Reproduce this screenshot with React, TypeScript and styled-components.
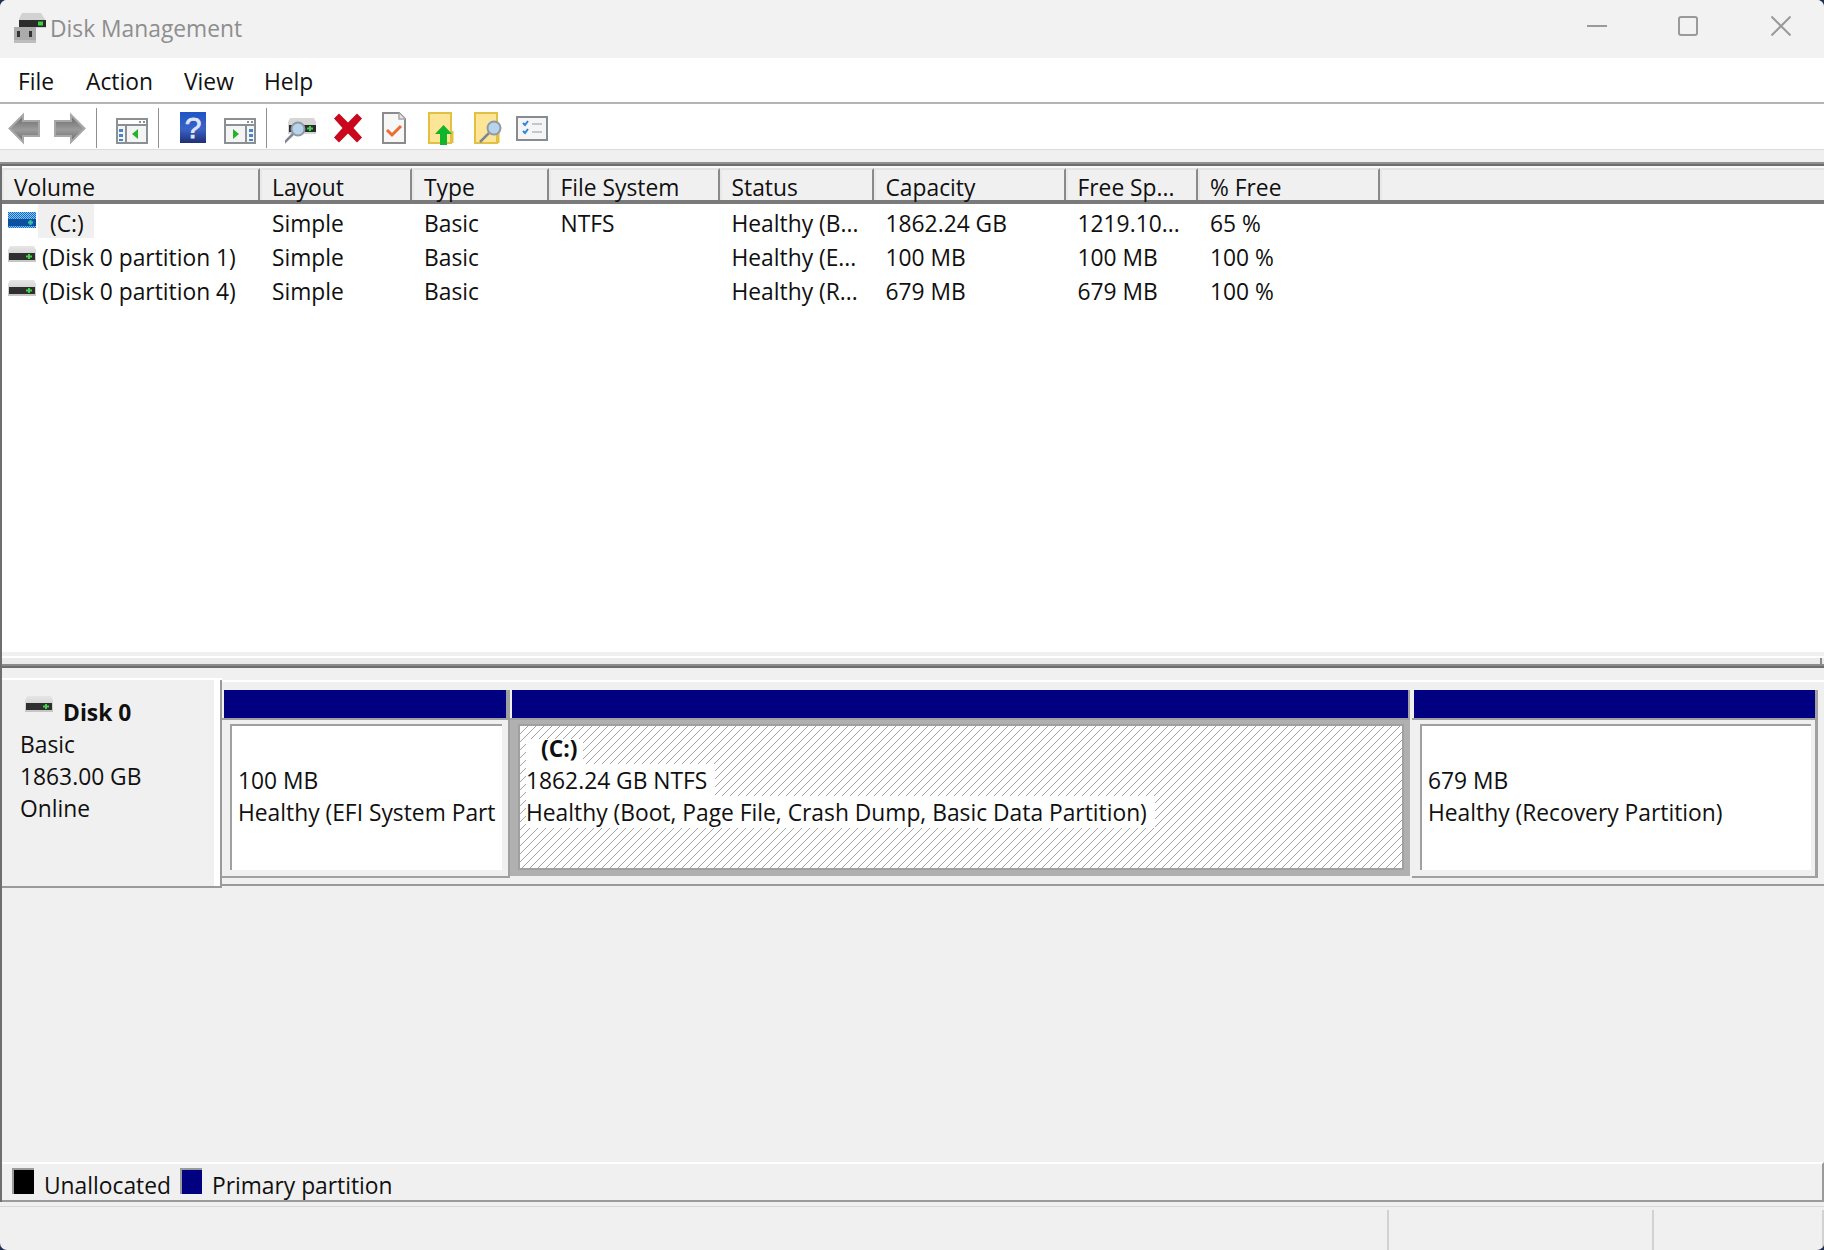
import React from "react";
import styled, { createGlobalStyle } from "styled-components";

const hatch =
  "data:image/svg+xml," +
  encodeURIComponent(
    `<svg xmlns='http://www.w3.org/2000/svg' width='8' height='8' shape-rendering='crispEdges'><rect width='8' height='8' fill='white'/>` +
      [0, 1, 2, 3, 4, 5, 6, 7].map((i) => `<rect x='${i}' y='${7 - i}' width='1' height='1' fill='#a2a2a2'/>`).join("") +
      `</svg>`
  );

const Global = createGlobalStyle`
  html, body { margin: 0; padding: 0; background: #1f2f55; }
  #root { width: 1824px; height: 1250px; }
  * { box-sizing: border-box; }
`;

const Win = styled.div`
  width: 1824px;
  height: 1250px;
  display: flex;
  flex-direction: column;
  overflow: hidden;
  border-radius: 7px;
  background: #f0f0f0;
  color: #101010;
  font-family: "Open Sans", "Noto Sans", "Liberation Sans", sans-serif;
  font-size: 22.8px;
  white-space: nowrap;
`;

const TitleBar = styled.div`
  height: 58px;
  flex: none;
  background: #f2f2f2;
  display: flex;
  align-items: center;
  padding: 0 33px 0 14px;
`;
const TitleText = styled.span`
  margin-left: 4px;
  color: #8e8e8e;
  position: relative;
  top: -1px;
`;
const Controls = styled.div`
  margin-left: auto;
  display: flex;
  gap: 72px;
  margin-top: -6px;
  & > svg:nth-child(1) { margin-right: -1px; }
  & > svg:nth-child(2) { margin-right: 1px; }
`;
const CtlIcon = styled.svg`
  width: 20px;
  height: 20px;
  fill: none;
  stroke: #9a9a9a;
  stroke-width: 2;
  display: block;
`;

const MenuBar = styled.div`
  height: 46px;
  flex: none;
  background: #fff;
  border-bottom: 2px solid #b2b4b8;
  display: grid;
  grid-template-columns: 68px 98px 80px auto;
  padding-left: 18px;
  align-items: center;
  justify-content: start;
`;
const MenuItem = styled.span`
  color: #111;
  position: relative;
  top: 1px;
`;

const Toolbar = styled.div`
  height: 45px;
  flex: none;
  background: #fff;
  display: flex;
  align-items: flex-start;
`;
const ToolSvg = styled.svg<{ $ml: number }>`
  display: block;
  height: 45px;
  flex: none;
  margin-left: ${(p) => p.$ml}px;
`;
const ToolSep = styled.div<{ $ml: number }>`
  width: 1px;
  height: 40px;
  margin-top: 4px;
  flex: none;
  background: #8f8f8f;
  margin-left: ${(p) => p.$ml}px;
`;
const ToolGap = styled.div`
  height: 13px;
  flex: none;
  background: #f0f0f0;
  border-top: 1px solid #dcdcdc;
`;

const Main = styled.div`
  height: 1040px;
  flex: none;
  display: flex;
  flex-direction: column;
  border-top: 4px solid #6e6e6e;
  border-left: 2px solid #6e6e6e;
  position: relative;
  &::before {
    content: "";
    position: absolute;
    left: -2px;
    right: 0;
    top: -4px;
    height: 2px;
    background: #909090;
  }
`;

const columns = "258px 152px 136.5px 171px 154px 192px 132.5px 181.5px 1fr";

const ListPanel = styled.div`
  height: 502px;
  flex: none;
  display: flex;
  flex-direction: column;
  background: #fff;
`;
const HeaderRow = styled.div`
  height: 38px;
  flex: none;
  display: grid;
  grid-template-columns: ${columns};
  background: #f0f0f0;
  border-bottom: 4px solid #7a7a7a;
  border-top: 2px solid #fafafa;
`;
const HeaderCell = styled.div`
  border-top: 2px solid #e3e3e3;
  border-left: 2px solid #e8e8e8;
  border-right: 2px solid #8a8a8a;
  padding-left: 10px;
  line-height: 35px;
  height: 32px;
  &:last-child { border-right: none; }
`;
const Rows = styled.div`
  flex: 1;
`;
const Row = styled.div`
  height: 34px;
  display: grid;
  grid-template-columns: ${columns};
  align-items: start;
`;
const Cell = styled.div`
  padding-left: 12px;
  line-height: 40px;
  height: 34px;
`;
const VolumeCell = styled.div`
  display: flex;
  align-items: flex-start;
  padding-left: 6px;
  height: 34px;
  line-height: 40px;
`;
const VolumeIcon = styled.svg`
  width: 28px;
  height: 16px;
  margin-top: 8px;
  flex: none;
  display: block;
`;
const VolName = styled.span<{ $selected?: boolean }>`
  margin-left: ${(p) => (p.$selected ? 2 : 6)}px;
  padding: 0 ${(p) => (p.$selected ? "10px" : "0")} 0 ${(p) => (p.$selected ? "12px" : "0")};
  background: ${(p) => (p.$selected ? "#f0f0f0" : "transparent")};
  height: 34px;
`;
const ScrollStub = styled.div`
  height: 12px;
  flex: none;
  background: #ebebeb;
  border-top: 4px solid #f0f0f0;
  box-shadow: inset 0 2px 0 #fff;
  position: relative;
  &::after {
    content: "";
    position: absolute;
    right: 2px;
    top: 2px;
    width: 2px;
    height: 6px;
    background: #8a8a8a;
  }
`;
const ScrollLine = styled.div`
  height: 4px;
  flex: none;
  background: #6e6e6e;
  box-shadow: inset 0 2px 0 #8c8c8c;
`;

const Graph = styled.div`
  flex: 1;
  display: flex;
  flex-direction: column;
  padding-top: 10px;
  background: #f0f0f0;
`;
const DiskRow = styled.div`
  height: 210px;
  flex: none;
  display: flex;
`;
const DiskInfo = styled.div`
  width: 220px;
  flex: none;
  border-top: 2px solid #fff;
  border-bottom: 2px solid #9a9a9a;
  box-shadow: inset -2px 0 0 #9a9a9a, inset -8px 0 0 #fff;
  padding: 17px 0 0 18px;
  line-height: 32px;
`;
const DiskTitle = styled.div`
  display: flex;
  align-items: flex-start;
  height: 32px;
  font-weight: 700;
`;
const DiskIcon = styled.svg`
  width: 28px;
  height: 16px;
  margin: -1px 10px 0 5px;
  flex: none;
  display: block;
`;
const Parts = styled.div`
  flex: 1;
  margin-top: 2px;
  border-top: 2px solid #fff;
  border-bottom: 2px solid #9a9a9a;
  padding: 8px 0 0;
  height: 206px;
  display: flex;
  align-items: flex-start;
`;
const Part = styled.div<{ $w: number; $rb?: number; $ml?: number }>`
  width: ${(p) => p.$w}px;
  margin-left: ${(p) => p.$ml ?? 0}px;
  flex: none;
  height: 188px;
  display: flex;
  flex-direction: column;
  border-right: ${(p) => p.$rb ?? 2}px solid #a0a0a0;
  border-bottom: 2px solid #a0a0a0;
`;
const BarTrack = styled.div`
  height: 30px;
  flex: none;
  padding-left: 2px;
  border-bottom: 2px solid #a0a0a0;
`;
const Bar = styled.div<{ $plain?: boolean }>`
  height: 28px;
  background: #000080;
  border-right: ${(p) => (p.$plain ? "none" : "2px solid #a0a0a0")};
`;
const Body = styled.div<{ $pr: number }>`
  flex: 1;
  padding: 4px ${(p) => p.$pr}px 6px 8px;
  background: #f0f0f0;
`;
const Inner = styled.div`
  height: 146px;
  background: #fff;
  border-top: 2px solid #a0a0a0;
  border-left: 2px solid #a0a0a0;
  padding: 39px 0 0 6px;
  line-height: 32px;
  overflow: hidden;
`;

const SelPart = styled.div`
  width: 900px;
  flex: none;
  height: 186px;
  display: flex;
  flex-direction: column;
`;
const SelTrack = styled.div`
  height: 30px;
  flex: none;
  padding-left: 2px;
  background: #f0f0f0;
  border-bottom: 2px solid #a0a0a0;
`;
const SelBody = styled.div`
  flex: 1;
  background: #b0b0b0;
  padding: 4px 6px 6px 8px;
`;
const HatchBox = styled.div`
  height: 146px;
  border: 2px solid #a0a0a0;
  background: url("${hatch}");
  padding: 13px 0 0 6px;
`;
const HatchTitle = styled.div`
  background: #fff;
  width: fit-content;
  height: 25px;
  line-height: 20px;
  padding: 0 6px 0 15px;
  font-weight: 700;
`;
const HatchLine = styled.div`
  background: #fff;
  width: fit-content;
  height: 32px;
  line-height: 33px;
  padding-right: 8px;
`;

const Filler = styled.div`
  flex: 1;
`;
const Legend = styled.div`
  height: 40px;
  flex: none;
  border-top: 2px solid #fff;
  border-bottom: 2px solid #9a9a9a;
  border-right: 2px solid #9a9a9a;
  display: flex;
  align-items: center;
  padding-left: 10px;
  line-height: 36px;
`;
const Swatch = styled.span<{ $c: string }>`
  width: 22px;
  height: 26px;
  flex: none;
  background: ${(p) => p.$c};
  border-top: 2px solid #9a9a9a;
  border-left: 2px solid #9a9a9a;
  margin-bottom: 2px;
`;
const LegendText = styled.span`
  margin: 7px 9px 0 10px;
`;

const StatusBar = styled.div`
  flex: 1;
  margin-top: 4px;
  border-top: 1px solid #d8d8d8;
  padding-top: 3px;
  display: grid;
  grid-template-columns: 1389px 265px 170px 1fr;
`;
const StatusCell = styled.div`
  border-right: 2px solid #d2d2d2;
  &:last-child { border-right: none; }
`;

const DriveGlyph = ({ id }: { id: string }) => (
  <>
    <defs>
      <linearGradient id={id} x1="0" y1="0" x2="0" y2="1">
        <stop offset="0" stopColor="#e6e6e6" />
        <stop offset="1" stopColor="#c4c4c4" />
      </linearGradient>
    </defs>
    <path d="M2 0H26L28 4V16H0V4Z" fill={`url(#${id})`} />
    <rect x="1" y="7" width="26" height="7" fill="#2f2f2f" />
    <rect x="18" y="9.5" width="6" height="2" fill="#3fd24a" />
    <rect x="20" y="8" width="2" height="5" fill="#3fd24a" />
  </>
);

const BlueDrive = () => (
  <VolumeIcon viewBox="0 0 28 16">
    <defs>
      <pattern id="chk" width="2" height="2" patternUnits="userSpaceOnUse">
        <rect width="2" height="2" fill="#8cc2f0" />
        <rect width="1" height="1" fill="#0f6ecb" />
        <rect x="1" y="1" width="1" height="1" fill="#0f6ecb" />
      </pattern>
    </defs>
    <rect width="28" height="16" fill="url(#chk)" />
    <rect y="7" width="28" height="7" fill="#0b4f9e" />
    <rect x="20" y="9.5" width="5" height="2" fill="#39c7a0" />
    <rect x="21.5" y="8" width="2" height="5" fill="#39c7a0" />
  </VolumeIcon>
);

const AppIcon = () => (
  <svg width="32" height="32" viewBox="0 0 32 32" style={{ flex: "none", display: "block", marginTop: -1 }}>
    <path d="M8 0H27L32 8V15H5V6Z" fill="#d2d2d2" />
    <rect x="5" y="7" width="27" height="7" fill="#2b2b2b" />
    <rect x="24" y="8.5" width="5" height="4" fill="#36d63f" />
    <rect x="0" y="14" width="22" height="16" fill="#ababab" />
    <rect x="3" y="18" width="3" height="6" fill="#333" />
    <rect x="15" y="18" width="3" height="6" fill="#333" />
    <rect x="0" y="27" width="22" height="3" fill="#bdbdbd" />
  </svg>
);

const Arrow = ({ flip, id, ml }: { flip?: boolean; id: string; ml: number }) => (
  <ToolSvg $ml={ml} width="32" height="45" viewBox="0 0 32 45">
    <defs>
      <linearGradient id={id} x1="0" y1="0" x2="0" y2="1">
        <stop offset="0" stopColor="#666" />
        <stop offset="0.55" stopColor="#9c9c9c" />
        <stop offset="1" stopColor="#6a6a6a" />
      </linearGradient>
    </defs>
    <path
      transform={flip ? "translate(32 0) scale(-1 1)" : undefined}
      d="M1.5 24.5L15 11V17H31V32H15V38Z"
      fill={`url(#${id})`}
      stroke="#a8a8a8"
      strokeWidth="2"
      strokeLinejoin="miter"
    />
  </ToolSvg>
);

const PaneIcon = ({ right, ml }: { right?: boolean; ml: number }) => (
  <ToolSvg $ml={ml} width="32" height="45" viewBox="0 0 32 45">
    <rect x="1" y="15" width="30" height="24" fill="#f4f4f4" stroke="#8b9095" strokeWidth="2" />
    <rect x="2" y="16" width="28" height="4" fill="#fff" />
    <rect x="2" y="20" width="28" height="2" fill="#8b9095" />
    <rect x="23" y="17" width="2" height="2" fill="#8b9095" />
    <rect x="27" y="17" width="2" height="2" fill="#8b9095" />
    {right ? (
      <>
        <rect x="21" y="22" width="2" height="16" fill="#8b9095" />
        <rect x="25" y="25" width="4" height="3" fill="#4a86c5" />
        <rect x="25" y="30" width="4" height="3" fill="#4a86c5" />
        <rect x="25" y="35" width="4" height="2" fill="#4a86c5" />
        <path d="M9 25L15 30L9 35Z" fill="#25b32a" />
      </>
    ) : (
      <>
        <rect x="9" y="22" width="2" height="16" fill="#8b9095" />
        <rect x="3" y="25" width="4" height="3" fill="#4a86c5" />
        <rect x="3" y="30" width="4" height="3" fill="#4a86c5" />
        <rect x="3" y="35" width="4" height="2" fill="#4a86c5" />
        <path d="M22 25L16 30L22 35Z" fill="#25b32a" />
      </>
    )}
  </ToolSvg>
);

const Magnifier = ({ cx, cy }: { cx: number; cy: number }) => (
  <>
    <line x1={cx - 5} y1={cy + 5} x2={cx - 14} y2={cy + 14} stroke="#7d8794" strokeWidth="2.5" />
    <circle cx={cx} cy={cy} r="6.5" fill="#b8d4ea" stroke="#8d99a6" strokeWidth="2" />
  </>
);

const HelpIcon = ({ ml }: { ml: number }) => (
  <ToolSvg $ml={ml} width="26" height="45" viewBox="0 0 26 45">
    <defs>
      <linearGradient id="hg" x1="0" y1="0" x2="0" y2="1">
        <stop offset="0" stopColor="#1e54c4" />
        <stop offset="0.55" stopColor="#3a63c8" />
        <stop offset="1" stopColor="#1f2f73" />
      </linearGradient>
    </defs>
    <rect x="0" y="8" width="26" height="31" fill="url(#hg)" />
    <text x="13" y="34" textAnchor="middle" fontSize="30" fontWeight="400" fill="#dfe6fb" stroke="#dfe6fb" strokeWidth="0.8" fontFamily="Liberation Sans, sans-serif">
      ?
    </text>
  </ToolSvg>
);

const DiskSearchIcon = ({ ml }: { ml: number }) => (
  <ToolSvg $ml={ml} width="32" height="45" viewBox="0 0 32 45">
    <path d="M5 14H29L31 18V30H3V18Z" fill="#d6d6d6" />
    <rect x="4" y="21" width="27" height="7" fill="#2b2b2b" />
    <rect x="22" y="23.5" width="6" height="2" fill="#3fd24a" />
    <rect x="24" y="22" width="2" height="5" fill="#3fd24a" />
    <Magnifier cx={13} cy={25} />
  </ToolSvg>
);

const DeleteIcon = ({ ml }: { ml: number }) => (
  <ToolSvg $ml={ml} width="28" height="45" viewBox="0 0 28 45">
    <path d="M5 9.5L14 18.5L23 9.5L28 14.5L19.5 24L28 33.5L23 38.5L14 29.5L5 38.5L0 33.5L8.5 24L0 14.5Z" fill="#c9071d" />
  </ToolSvg>
);

const CheckDocIcon = ({ ml }: { ml: number }) => (
  <ToolSvg $ml={ml} width="24" height="45" viewBox="0 0 24 45">
    <path d="M1 9H17L23 15V39H1Z" fill="#f7f7f7" stroke="#8b8b8b" strokeWidth="2" />
    <path d="M17 9V15H23" fill="#e4e4e4" stroke="#a8a8a8" strokeWidth="1.5" />
    <path d="M5 26L10 31L19 22" fill="none" stroke="#ee6a2d" strokeWidth="3" />
  </ToolSvg>
);

const FolderBase = () => (
  <>
    <rect x="1" y="9" width="22" height="30" fill="#fde597" stroke="#e2c044" strokeWidth="2" />
    <rect x="23" y="27" width="2.5" height="12" fill="#e2c044" />
  </>
);

const FolderUpIcon = ({ ml }: { ml: number }) => (
  <ToolSvg $ml={ml} width="26" height="45" viewBox="0 0 26 45">
    <FolderBase />
    <path d="M7 30L15.5 21L24 30H19V41H12V30Z" fill="#10b52c" />
  </ToolSvg>
);

const FolderFindIcon = ({ ml }: { ml: number }) => (
  <ToolSvg $ml={ml} width="28" height="45" viewBox="0 0 28 45">
    <FolderBase />
    <Magnifier cx={20} cy={24} />
  </ToolSvg>
);

const TaskIcon = ({ ml }: { ml: number }) => (
  <ToolSvg $ml={ml} width="32" height="45" viewBox="0 0 32 45">
    <rect x="1" y="13" width="30" height="23" fill="#f5f5f5" stroke="#878c92" strokeWidth="2" />
    <path d="M7 19L9 21L12 17" fill="none" stroke="#2e82d8" strokeWidth="2" />
    <path d="M7 27L9 29L12 25" fill="none" stroke="#2e82d8" strokeWidth="2" />
    <rect x="16" y="19" width="10" height="2" fill="#c4c8cc" />
    <rect x="16" y="27" width="10" height="2" fill="#c4c8cc" />
  </ToolSvg>
);

const headers = ["Volume", "Layout", "Type", "File System", "Status", "Capacity", "Free Sp...", "% Free", ""];

const rows = [
  { name: "(C:)", selected: true, fs: "NTFS", status: "Healthy (B...", cap: "1862.24 GB", free: "1219.10...", pct: "65 %" },
  { name: "(Disk 0 partition 1)", fs: "", status: "Healthy (E...", cap: "100 MB", free: "100 MB", pct: "100 %" },
  { name: "(Disk 0 partition 4)", fs: "", status: "Healthy (R...", cap: "679 MB", free: "679 MB", pct: "100 %" },
];

export default function App() {
  return (
    <Win>
      <Global />
      <TitleBar>
        <AppIcon />
        <TitleText>Disk Management</TitleText>
        <Controls>
          <CtlIcon viewBox="0 0 20 20">
            <line x1="0" y1="10" x2="20" y2="10" />
          </CtlIcon>
          <CtlIcon viewBox="0 0 20 20">
            <rect x="1" y="1" width="18" height="18" rx="2" />
          </CtlIcon>
          <CtlIcon viewBox="0 0 20 20" strokeWidth={1.5}>
            <path d="M0.5 0.5L19.5 19.5M19.5 0.5L0.5 19.5" />
          </CtlIcon>
        </Controls>
      </TitleBar>
      <MenuBar>
        <MenuItem>File</MenuItem>
        <MenuItem>Action</MenuItem>
        <MenuItem>View</MenuItem>
        <MenuItem>Help</MenuItem>
      </MenuBar>
      <Toolbar>
        <Arrow id="ba" ml={8} />
        <Arrow id="fa" flip ml={14} />
        <ToolSep $ml={10} />
        <PaneIcon ml={19} />
        <ToolSep $ml={10} />
        <HelpIcon ml={21} />
        <PaneIcon right ml={18} />
        <ToolSep $ml={10} />
        <DiskSearchIcon ml={18} />
        <DeleteIcon ml={17} />
        <CheckDocIcon ml={20} />
        <FolderUpIcon ml={22} />
        <FolderFindIcon ml={20} />
        <TaskIcon ml={14} />
      </Toolbar>
      <ToolGap />
      <Main>
        <ListPanel>
          <HeaderRow>
            {headers.map((h, i) => (
              <HeaderCell key={i}>{h}</HeaderCell>
            ))}
          </HeaderRow>
          <Rows>
            {rows.map((r, i) => (
              <Row key={i}>
                <VolumeCell>
                  {r.selected ? (
                    <BlueDrive />
                  ) : (
                    <VolumeIcon viewBox="0 0 28 16">
                      <DriveGlyph id={`dg${i}`} />
                    </VolumeIcon>
                  )}
                  <VolName $selected={r.selected}>{r.name}</VolName>
                </VolumeCell>
                <Cell>Simple</Cell>
                <Cell>Basic</Cell>
                <Cell>{r.fs}</Cell>
                <Cell>{r.status}</Cell>
                <Cell>{r.cap}</Cell>
                <Cell>{r.free}</Cell>
                <Cell>{r.pct}</Cell>
                <Cell />
              </Row>
            ))}
          </Rows>
          <ScrollStub />
          <ScrollLine />
        </ListPanel>
        <Graph>
          <DiskRow>
            <DiskInfo>
              <DiskTitle>
                <DiskIcon viewBox="0 0 28 16">
                  <DriveGlyph id="dgd" />
                </DiskIcon>
                <span>Disk 0</span>
              </DiskTitle>
              <div>Basic</div>
              <div>1863.00 GB</div>
              <div>Online</div>
            </DiskInfo>
            <Parts>
              <Part $w={288}>
                <BarTrack>
                  <Bar />
                </BarTrack>
                <Body $pr={6}>
                  <Inner>
                    <div>100 MB</div>
                    <div>Healthy (EFI System Part</div>
                  </Inner>
                </Body>
              </Part>
              <SelPart>
                <SelTrack>
                  <Bar />
                </SelTrack>
                <SelBody>
                  <HatchBox>
                    <HatchTitle>(C:)</HatchTitle>
                    <HatchLine>1862.24 GB NTFS</HatchLine>
                    <HatchLine>Healthy (Boot, Page File, Crash Dump, Basic Data Partition)</HatchLine>
                  </HatchBox>
                </SelBody>
              </SelPart>
              <Part $w={406} $rb={3} $ml={2}>
                <BarTrack>
                  <Bar $plain />
                </BarTrack>
                <Body $pr={4}>
                  <Inner>
                    <div>679 MB</div>
                    <div>Healthy (Recovery Partition)</div>
                  </Inner>
                </Body>
              </Part>
            </Parts>
          </DiskRow>
          <Filler />
          <Legend>
            <Swatch $c="#000" />
            <LegendText>Unallocated</LegendText>
            <Swatch $c="#000080" />
            <LegendText>Primary partition</LegendText>
          </Legend>
        </Graph>
      </Main>
      <StatusBar>
        <StatusCell />
        <StatusCell />
        <StatusCell />
        <StatusCell />
      </StatusBar>
    </Win>
  );
}
